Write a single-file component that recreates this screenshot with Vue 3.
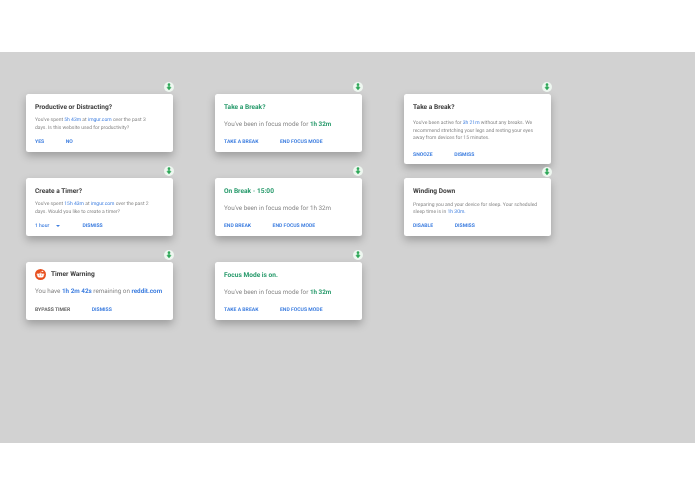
<script setup>
const columns = [
  { cls: 'col-a', cards: [
    { title: 'Productive or Distracting?', size: 'small', lines: [
      [['You\'ve spent '], ['5h 43m', 'blue'], [' at '], ['imgur.com', 'blue'], [' over the past 3']],
      [['days. Is this website used for productivity?']],
    ], actions: [{ t: 'YES' }, { t: 'NO' }] },
    { title: 'Create a Timer?', size: 'small', lines: [
      [['You\'ve spent '], ['15h 43m', 'blue'], [' at '], ['imgur.com', 'blue'], [' over the past 2']],
      [['days. Would you like to create a timer?']],
    ], select: '1 hour', actions: [{ t: 'DISMISS' }] },
    { title: 'Timer Warning', size: 'medium', reddit: true, lines: [
      [['You have '], ['1h 2m 42s', 'blue strong'], [' remaining on '], ['reddit.com', 'blue strong']],
    ], actions: [{ t: 'BYPASS TIMER', grey: true }, { t: 'DISMISS' }] },
  ]},
  { cls: 'col-b', cards: [
    { title: 'Take a Break?', green: true, size: 'medium', lines: [[['You\'ve been in focus mode for '], ['1h 32m', 'green strong']]], actions: [{ t: 'TAKE A BREAK' }, { t: 'END FOCUS MODE' }] },
    { title: 'On Break - 15:00', green: true, size: 'medium', lines: [[['You\'ve been in focus mode for 1h 32m']]], actions: [{ t: 'END BREAK' }, { t: 'END FOCUS MODE' }] },
    { title: 'Focus Mode is on.', green: true, size: 'medium', lines: [[['You\'ve been in focus mode for '], ['1h 32m', 'green strong']]], actions: [{ t: 'TAKE A BREAK' }, { t: 'END FOCUS MODE' }] },
  ]},
  { cls: 'col-c', cards: [
    { title: 'Take a Break?', size: 'small', tall: true, lines: [
      [['You\'ve been active for '], ['3h 21m', 'blue'], [' without any breaks. We']],
      [['recommend stretching your legs and resting your eyes']],
      [['away from devices for 15 minutes.']],
    ], actions: [{ t: 'SNOOZE' }, { t: 'DISMISS' }] },
    { title: 'Winding Down', size: 'small', wind: true, lines: [
      [['Preparing you and your device for sleep. Your scheduled']],
      [['sleep time is in '], ['1h 30m.', 'blue']],
    ], actions: [{ t: 'DISABLE' }, { t: 'DISMISS' }] },
  ]},
]
</script>

<template>
  <div class="page">
    <div class="board">
      <div v-for="col in columns" :key="col.cls" class="column" :class="col.cls">
        <div v-for="card in col.cards" :key="card.title" class="card" :class="{ tall: card.tall, wind: card.wind, warn: card.reddit }">
          <span class="badge">
            <svg viewBox="0 0 10 10" width="8" height="8">
              <circle cx="5" cy="2.1" r="1.7" fill="#2fa859" />
              <path d="M3.4 4.2h3.2v1.2h1.6L5 9.2 1.8 5.4h1.6z" fill="#2fa859" />
            </svg>
          </span>
          <div class="head">
            <svg v-if="card.reddit" class="reddit" viewBox="0 0 12 12" width="11" height="11">
              <circle cx="6" cy="6" r="6" fill="#e8501f" />
              <ellipse cx="6" cy="7" rx="3.5" ry="2.4" fill="#fff" />
              <circle cx="2.6" cy="5.6" r="0.8" fill="#fff" />
              <circle cx="9.4" cy="5.6" r="0.8" fill="#fff" />
              <circle cx="8.4" cy="2.6" r="0.7" fill="#fff" />
              <path d="M6 4.6 6.5 2.6 8.2 2.9" fill="none" stroke="#fff" stroke-width="0.4" />
              <circle cx="4.7" cy="6.5" r="0.55" fill="#e8501f" />
              <circle cx="7.3" cy="6.5" r="0.55" fill="#e8501f" />
            </svg>
            <h3 class="title" :class="{ green: card.green }">{{ card.title }}</h3>
          </div>
          <div class="body" :class="card.size">
            <div v-for="(line, n) in card.lines" :key="n" class="line">
              <span v-for="(part, i) in line" :key="i" :class="part[1]">{{ part[0] }}</span>
            </div>
          </div>
          <div class="actions">
            <span v-if="card.select" class="select">{{ card.select }}<i class="caret"></i></span>
            <span v-for="a in card.actions" :key="a.t" class="action" :class="{ grey: a.grey }">{{ a.t }}</span>
          </div>
        </div>
      </div>
    </div>
  </div>
</template>

<style>
html, body { margin: 0; background: #fff; }
</style>

<style scoped>
.page {
  width: 695px;
  height: 494px;
  padding: 52px 0 51px;
  box-sizing: border-box;
  font-family: Roboto, "Liberation Sans", sans-serif;
  text-rendering: geometricPrecision;
}
.board {
  height: 391px;
  background: #d2d2d2;
  box-sizing: border-box;
  padding: 41.5px 0 0 26px;
  display: grid;
  grid-template-columns: repeat(3, 147px);
  column-gap: 42px;
  align-items: start;
}
.column { display: flex; flex-direction: column; gap: 26px; }
.col-c { gap: 14.5px; }
.card {
  position: relative;
  height: 58px;
  box-sizing: border-box;
  padding: 8.5px 9px 0;
  background: #fff;
  border-radius: 2.5px;
  box-shadow: 0 4px 8px rgba(0, 0, 0, 0.26);
  display: flex;
  flex-direction: column;
  will-change: transform;
}
.card.tall { height: 70px; }
.badge {
  position: absolute;
  right: -1px;
  top: -12.5px;
  width: 10px;
  height: 10px;
  border-radius: 50%;
  background: #eef7f0;
  display: flex;
  align-items: center;
  justify-content: center;
}
.card.wind .badge { top: -11.5px; }
.head { display: flex; align-items: center; gap: 5px; height: 9px; }
.card.warn .head { height: 11px; margin-top: -1.5px; }
.card.wind .head { margin-top: 0.5px; }
.reddit { flex: none; }
.title {
  margin: 0;
  font-size: 6.6px;
  line-height: 9px;
  font-weight: 700;
  color: #3c3c3c;
  white-space: nowrap;
}
.title.green { color: #279a6b; }
.body { margin: 0; color: #868686; }
.line { white-space: nowrap; }
.body.small {
  margin-top: 5.5px;
  font-size: 5px;
  line-height: 7.5px;
}
.card.tall .body.small { margin-top: 8.5px; }
.card.wind .body.small { margin-top: 5.5px; }
.body.medium {
  margin-top: 8px;
  font-size: 6.3px;
  line-height: 9px;
}
.card.warn .body.medium { margin-top: 7px; }
.blue { color: #3f7fe0; }
.green { color: #279a6b; }
.strong { font-weight: 700; }
.actions {
  margin-top: auto;
  margin-bottom: 6px;
  display: flex;
  align-items: center;
  gap: 21.5px;
  height: 7px;
}
.card.tall .actions { margin-bottom: 5px; }
.action {
  font-size: 5.1px;
  line-height: 7px;
  font-weight: 700;
  color: #3f7fe0;
  white-space: nowrap;
}
.action.grey { color: #666; }
.select {
  width: 26px;
  font-size: 5px;
  line-height: 7px;
  font-weight: 500;
  color: #3f7fe0;
  position: relative;
  display: block;
}
.caret {
  position: absolute;
  left: 21px;
  top: 2.4px;
  border-left: 2.3px solid transparent;
  border-right: 2.3px solid transparent;
  border-top: 2.6px solid #3f7fe0;
}
</style>
